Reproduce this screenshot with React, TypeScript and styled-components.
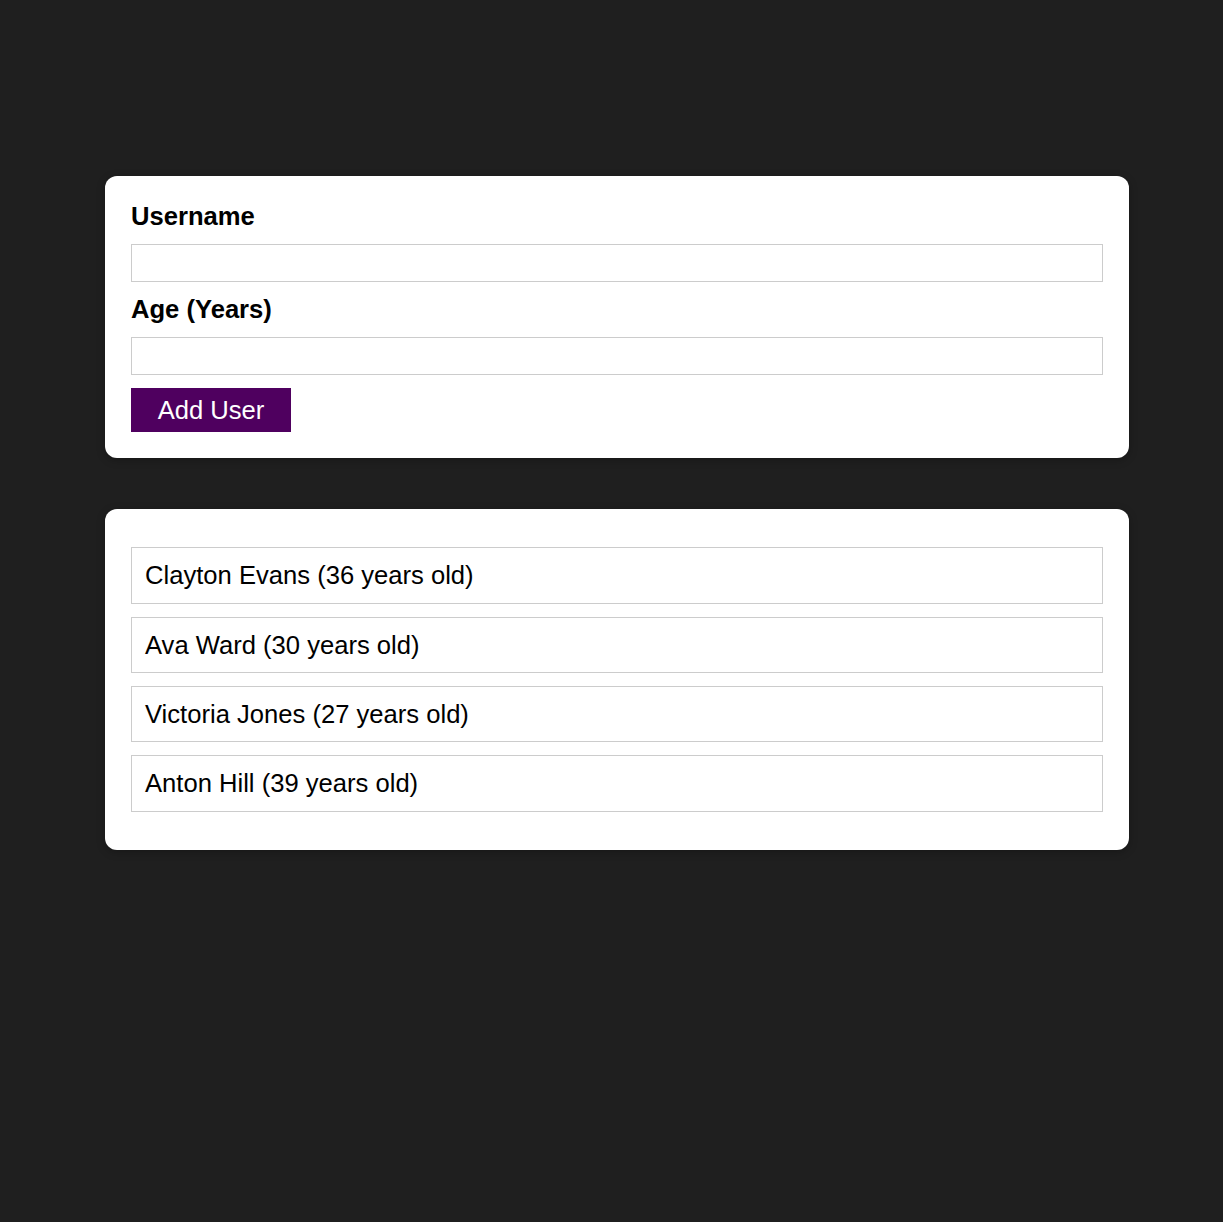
import React from "react";
import styled, { createGlobalStyle } from "styled-components";

const GlobalStyle = createGlobalStyle`
  * { box-sizing: border-box; }
  html { font-size: 25.6px; }
  body {
    margin: 0;
    background: #1f1f1f;
    font-family: "Liberation Sans", Arial, sans-serif;
  }
`;

const Page = styled.div`
  padding: 125px 94px 0 105px;
  min-height: 1222px;
`;

const Card = styled.div`
  background: #ffffff;
  box-shadow: 0 2px 8px rgba(0, 0, 0, 0.26);
  border-radius: 12px;
  width: 1024px;
  margin: 51px 0;
`;

const Form = styled.form`
  padding: 26px;
`;

const Label = styled.label`
  display: block;
  font-weight: bold;
  line-height: 29px;
  margin-bottom: 13px;
  color: #000;
`;

const Input = styled.input`
  font: inherit;
  display: block;
  width: 100%;
  border: 1px solid #ccc;
  padding: 0.15rem;
  margin: 0 0 13px 0;
  height: 38px;
`;

const Button = styled.button`
  font: inherit;
  display: block;
  border: 1px solid #4f005f;
  background: #4f005f;
  color: #fff;
  padding: 0;
  width: 160px;
  height: 44px;
  line-height: 42px;
  cursor: pointer;
`;

const List = styled.ul`
  list-style: none;
  padding: 25.6px 26px;
  margin: 0;
`;

const Item = styled.li`
  border: 1px solid #ccc;
  margin: 12.8px 0;
  padding: 0 13px;
  height: 56.5px;
  line-height: 54.5px;
  color: #000;
`;

const users = [
  { name: "Clayton Evans", age: 36 },
  { name: "Ava Ward", age: 30 },
  { name: "Victoria Jones", age: 27 },
  { name: "Anton Hill", age: 39 },
];

export default function App() {
  return (
    <>
      <GlobalStyle />
      <Page>
        <Card>
          <Form onSubmit={(e) => e.preventDefault()}>
            <Label htmlFor="username">Username</Label>
            <Input id="username" type="text" />
            <Label htmlFor="age">Age (Years)</Label>
            <Input id="age" type="number" />
            <Button type="submit">Add User</Button>
          </Form>
        </Card>
        <Card>
          <List>
            {users.map((u) => (
              <Item key={u.name}>
                {u.name} ({u.age} years old)
              </Item>
            ))}
          </List>
        </Card>
      </Page>
    </>
  );
}
